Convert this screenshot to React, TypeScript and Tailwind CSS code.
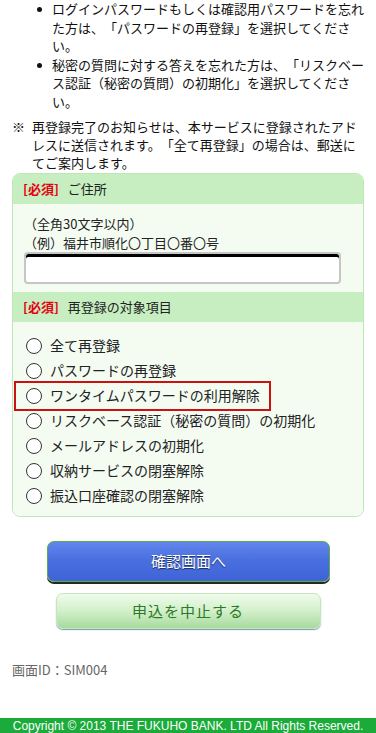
import React from "react";

const RADIO_ITEMS = [
  "全て再登録",
  "パスワードの再登録",
  "ワンタイムパスワードの利用解除",
  "リスクベース認証（秘密の質問）の初期化",
  "メールアドレスの初期化",
  "収納サービスの閉塞解除",
  "振込口座確認の閉塞解除",
];

function SectionHeader({ label }: { label: string }) {
  return (
    <div className="flex h-[30px] items-center bg-[#c6eec0] pl-[10px] text-[13px] text-[#222]">
      <span className="font-bold text-[#e60012]">[必須]</span>
      <span className="ml-[9px]">{label}</span>
    </div>
  );
}

function Radio({ label, marked }: { label: string; marked?: boolean }) {
  return (
    <label className="relative flex h-[25px] items-center">
      {marked && (
        <span className="pointer-events-none absolute -left-[12px] -top-[2.5px] h-[30px] w-[257px] border-2 border-[#cc1111]" />
      )}
      <span className="h-[16px] w-[16px] shrink-0 rounded-full border-[1.5px] border-[#333] bg-white" />
      <span className="ml-[8px] text-[14px] text-[#222]">{label}</span>
    </label>
  );
}

export default function App() {
  return (
    <div
      className="min-h-screen bg-white text-[#111] [text-spacing-trim:space-all]"
      style={{ fontFamily: '"Noto Sans CJK JP", "Noto Sans", sans-serif' }}
    >
      {/* 注意書き */}
      <div className="pl-[12px] pr-[8px] text-[13px] leading-[18.5px]">
        <ul className="pl-[25px]">
          <li className="flex">
            <span className="mt-[7px] h-[5px] w-[5px] shrink-0 rounded-full bg-[#111]" />
            <span className="ml-[10px]">
              ログインパスワードもしくは確認用パスワードを忘れた方は、「パスワードの再登録」を選択してください。
            </span>
          </li>
          <li className="flex">
            <span className="mt-[7px] h-[5px] w-[5px] shrink-0 rounded-full bg-[#111]" />
            <span className="ml-[10px]">
              秘密の質問に対する答えを忘れた方は、「リスクベース認証（秘密の質問）の初期化」を選択してください。
            </span>
          </li>
        </ul>
        <div className="mt-[7px] flex leading-[18px]">
          <span className="w-[20px] shrink-0">※</span>
          <span>
            再登録完了のお知らせは、本サービスに登録されたアドレスに送信されます。「全て再登録」の場合は、郵送にてご案内します。
          </span>
        </div>
      </div>

      {/* 入力フォーム */}
      <div className="mx-[12px] mt-[1px] overflow-hidden rounded-[8px] border border-[#bfe7b6]">
        <SectionHeader label="ご住所" />
        <div className="bg-[#f4fcf2] pb-[8px] pl-[11px] pt-[11px] text-[13px] leading-[18.5px] text-[#222]">
          <p>（全角30文字以内）</p>
          <p>（例）福井市順化〇丁目〇番〇号</p>
          <input
            type="text"
            className="block h-[32px] w-[317px] rounded-[4px] border-2 border-[#c6c6c6] bg-white px-2 shadow-[inset_0_3px_0_#000] outline-none"
          />
        </div>
        <SectionHeader label="再登録の対象項目" />
        <div className="bg-[#f4fcf2] pb-[8px] pl-[13px] pt-[11px]">
          {RADIO_ITEMS.map((item, i) => (
            <Radio key={item} label={item} marked={i === 2} />
          ))}
        </div>
      </div>

      {/* ボタン */}
      <div className="mt-[24px] flex flex-col items-center">
        <button
          type="button"
          className="ml-[1px] h-[41px] w-[283px] rounded-[7px] border border-[#5aae48] bg-[linear-gradient(#6286ec,#4a70e0_45%,#3f63d6)] text-[15px] text-white shadow-[0_2px_0_#1f2e1a] [text-shadow:0_1px_1px_#1a2a55]"
        >
          確認画面へ
        </button>
        <button
          type="button"
          className="mt-[11px] h-[36px] w-[265px] rounded-[7px] border border-[#c2e8b9] bg-[linear-gradient(#f0fbec,#d2f0ca_50%,#a8da9e)] text-[15px] tracking-[1px] text-[#2b7a27] shadow-[0_1px_1px_#7f95b5]"
        >
          申込を中止する
        </button>
      </div>

      <p className="ml-[12px] mt-[31px] text-[13px] text-[#666]">画面ID：SIM004</p>

      <footer
        className="mt-[38px] flex h-[18px] items-start justify-center whitespace-nowrap bg-[#1aab3a] pt-[1px] text-[12px] leading-[15px] text-white"
        style={{ fontFamily: '"Liberation Sans Narrow", "Liberation Sans", Arial, sans-serif' }}
      >
        Copyright © 2013 THE FUKUHO BANK. LTD All Rights Reserved.
      </footer>
    </div>
  );
}
